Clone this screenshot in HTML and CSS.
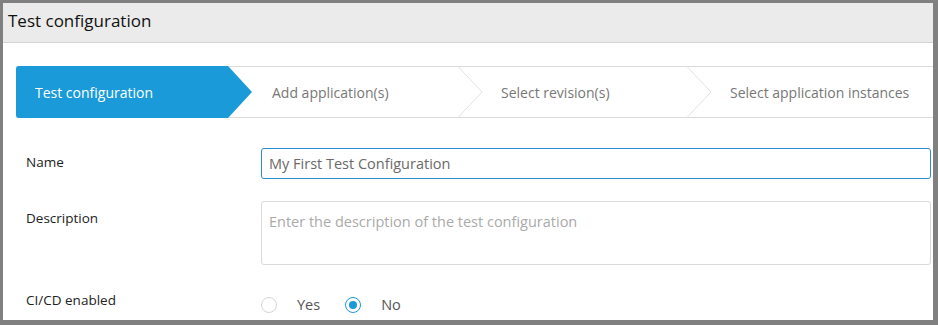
FILE: index.html
```html
<!DOCTYPE html>
<html lang="en">
  <head>
    <meta charset="UTF-8" />
    <meta name="viewport" content="width=device-width, initial-scale=1.0" />
    <title>Test configuration</title>
    <link rel="stylesheet" href="styles.css">
  </head>
  <body>
    <div class="panel">
      <div class="panel-header">Test configuration</div>

      <div class="panel-body">
        <div class="stepper">
          <div class="step active">
            <span>Test configuration</span>
            <svg class="step-arrow" width="24" height="52" viewBox="0 0 24 52">
              <polygon points="0,0 24,26 0,52" fill="#1a9ad9" />
            </svg>
          </div>
          <div class="step">
            <span>Add application(s)</span>
            <svg class="step-sep" width="26" height="52" viewBox="0 0 26 52">
              <polyline points="0.5,0 25,26 0.5,52" fill="none" stroke="#e2e2e2" />
            </svg>
          </div>
          <div class="step">
            <span>Select revision(s)</span>
            <svg class="step-sep" width="26" height="52" viewBox="0 0 26 52">
              <polyline points="0.5,0 25,26 0.5,52" fill="none" stroke="#e2e2e2" />
            </svg>
          </div>
          <div class="step">
            <span>Select application instances</span>
          </div>
        </div>

        <form class="form">
          <label class="form-label" for="name">Name</label>
          <input id="name" class="field field-focus" type="text" placeholder="My First Test Configuration" />

          <label class="form-label label-area" for="desc">Description</label>
          <textarea id="desc" class="field field-area" placeholder="Enter the description of the test configuration"></textarea>

          <div class="form-label label-radio">CI/CD enabled</div>
          <div class="radios">
            <span class="radio"><span class="dot"></span>Yes</span>
            <span class="radio checked"><span class="dot"></span>No</span>
          </div>
        </form>
      </div>
    </div>
  </body>
</html>
```

FILE: styles.css
```css
html, body {
  height: 100%;
}
body {
  margin: 0;
  padding: 3px 5px 5px 3px;
  box-sizing: border-box;
  background: #808080;
  font-family: "Open Sans", Arial, sans-serif;
  overflow: hidden;
}
.panel {
  background: white;
  height: 100%;
  overflow: hidden;
}
.panel-header {
  height: 40px;
  box-sizing: border-box;
  padding: 6px 0 0 5px;
  background: #ebebeb;
  border-bottom: 1px solid #d3d3d3;
  font-size: 17px;
  color: #111;
}
.panel-body {
  padding: 23px 0 0 13px;
}
.stepper {
  display: flex;
  height: 52px;
  box-sizing: border-box;
  border-top: 1px solid #dcdcdc;
  border-bottom: 1px solid #dcdcdc;
  margin-right: -40px;
}
.step {
  position: relative;
  display: flex;
  align-items: center;
  width: 229px;
  padding-left: 44px;
  box-sizing: border-box;
  font-size: 14px;
  color: #777;
  flex-shrink: 0;
}
.step.active {
  width: 212px;
  padding-left: 19px;
  margin-top: -1px;
  margin-bottom: -1px;
  background: #1a9ad9;
  color: white;
  border-radius: 3px 0 0 3px;
}
.step-arrow {
  position: absolute;
  top: 0;
  right: -24px;
  z-index: 1;
}
.step-sep {
  position: absolute;
  top: -1px;
  right: -26px;
}
.step:last-child {
  width: 300px;
}
.form {
  display: grid;
  grid-template-columns: 235px 670px;
  row-gap: 22px;
  margin-top: 30px;
  padding-left: 10px;
}
.form-label {
  font-size: 13.5px;
  color: #222;
  padding-top: 5px;
}
.label-area {
  padding-top: 8px;
}
.label-radio {
  padding-top: 4px;
}
.field {
  font-family: inherit;
  font-size: 14.5px;
  border: 1px solid #dadada;
  border-radius: 3px;
  padding: 0 7px;
  box-sizing: border-box;
  outline: none;
}
.field-focus {
  height: 31px;
  border-color: #2a8fcc;
}
.field-focus::placeholder {
  color: #6a6a6a;
}
.field-area {
  height: 64px;
  padding-top: 10px;
  resize: none;
}
.field-area::placeholder {
  color: #aaa;
}
.radios {
  display: flex;
  gap: 25px;
  padding-top: 8px;
  font-size: 14.5px;
  color: #555;
}
.radio {
  display: flex;
  align-items: center;
  gap: 20px;
}
.dot {
  width: 16px;
  height: 16px;
  box-sizing: border-box;
  border: 1px solid #d6d6d6;
  border-radius: 50%;
  display: flex;
  align-items: center;
  justify-content: center;
}
.checked .dot {
  border-color: #1a9ad9;
}
.checked .dot::after {
  content: "";
  width: 8px;
  height: 8px;
  border-radius: 50%;
  background: #1a9ad9;
}
```
